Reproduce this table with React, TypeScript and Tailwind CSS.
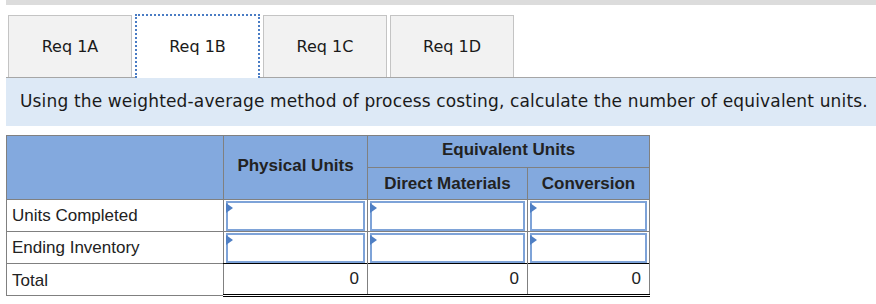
import React from 'react';

const tabs = ['Req 1A', 'Req 1B', 'Req 1C', 'Req 1D'];

function EntryCell() {
  return (
    <td className="p-0 border border-[#808080] h-[32px]">
      <div className="relative mx-[2px] h-[30px] border-2 border-[#7ea3d8] bg-white">
        {/* marker flag in the corner of each entry box */}
        <span className="absolute left-[-2px] top-[0px] w-0 h-0 border-y-[5px] border-y-transparent border-l-[7px] border-l-[#4f7fc4]" />
      </div>
    </td>
  );
}

function TotalCell() {
  return (
    <td className="border-x border-[#808080] border-t border-t-black border-b-[3px] border-b-black border-double h-[32px] px-[8px] text-right">
      0
    </td>
  );
}

export default function App() {
  return (
    <main className="w-[876px] h-[304px] bg-white pl-[6px] overflow-hidden">
      <div className="h-[5px] bg-[#dcdcdc]" />

      <div className="mt-[10px] flex gap-[3px] pl-[2px] border-b border-[#a6a6a6] h-[63px] font-['DejaVu_Sans',sans-serif] text-[16px] text-[#1a1a1a]">
        {tabs.map((t, i) =>
          i === 1 ? (
            <div
              key={t}
              className="w-[125px] h-[64px] -mt-[1px] flex items-center justify-center bg-white border-2 border-dotted border-[#4a7cc4] border-b-0"
            >
              {t}
            </div>
          ) : (
            <div
              key={t}
              className="w-[124px] h-[62px] flex items-center justify-center bg-[#f2f2f2] border border-[#c4c4c4] border-b-0"
            >
              {t}
            </div>
          )
        )}
      </div>

      <div className="h-[48px] bg-[#dde9f6] flex items-center pl-[14px] font-['DejaVu_Sans',sans-serif] text-[17px] text-[#1a1a1a] tracking-[0.15px]">
        Using the weighted-average method of process costing, calculate the number of equivalent units.
      </div>

      <table className="mt-[9px] border-collapse font-['Liberation_Sans',Arial,sans-serif] text-[17px] text-[#222]">
        <colgroup>
          <col className="w-[217px]" />
          <col className="w-[144px]" />
          <col className="w-[160px]" />
          <col className="w-[122px]" />
        </colgroup>
        <thead>
          <tr className="bg-[#83a9de] font-bold">
            <th rowSpan={2} className="border border-[#808080]" />
            <th rowSpan={2} className="border border-[#808080] text-center pb-[3px]">
              Physical Units
            </th>
            <th colSpan={2} className="border border-[#808080] h-[32px] text-center pb-[3px]">
              Equivalent Units
            </th>
          </tr>
          <tr className="bg-[#83a9de] font-bold">
            <th className="border border-[#808080] h-[32px] text-center">Direct Materials</th>
            <th className="border border-[#808080] text-center">Conversion</th>
          </tr>
        </thead>
        <tbody>
          <tr>
            <td className="border border-[#808080] h-[32px] px-[5px]">Units Completed</td>
            <EntryCell />
            <EntryCell />
            <EntryCell />
          </tr>
          <tr>
            <td className="border border-[#808080] h-[32px] px-[5px]">Ending Inventory</td>
            <EntryCell />
            <EntryCell />
            <EntryCell />
          </tr>
          <tr>
            <td className="border border-[#808080] h-[32px] px-[5px] pt-[2px]">Total</td>
            <TotalCell />
            <TotalCell />
            <TotalCell />
          </tr>
        </tbody>
      </table>
    </main>
  );
}
